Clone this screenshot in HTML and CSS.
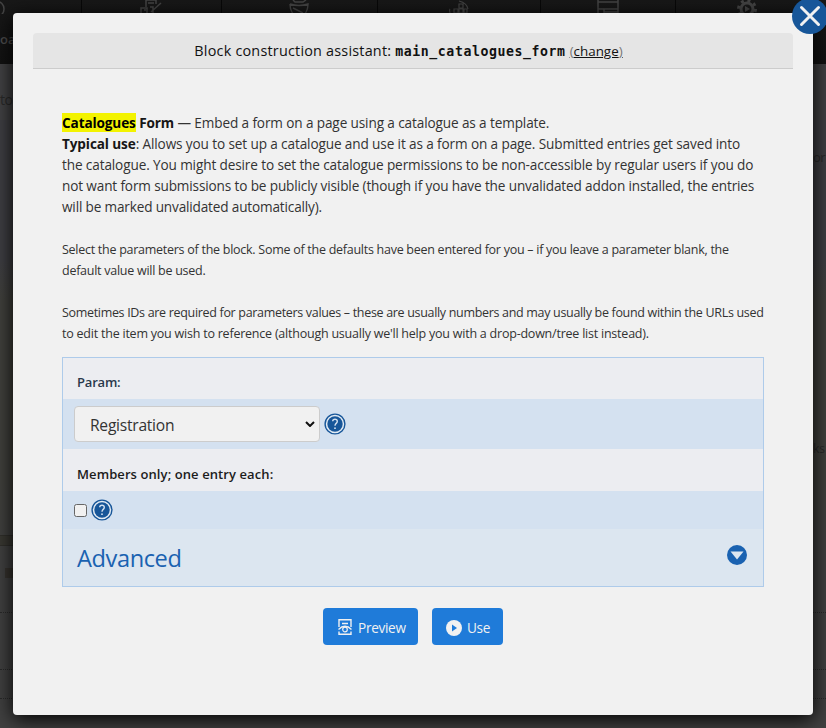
FILE: index.html
```html
<!DOCTYPE html>
<html lang="en">
<head>
<meta charset="utf-8">
<title>Block construction assistant</title>
<link rel="stylesheet" href="styles.css">
</head>
<body>
<div class="backdrop" aria-hidden="true">
  <div class="topbar">
    <span class="sep s1"></span><span class="sep s2"></span><span class="sep s3"></span><span class="sep s4"></span><span class="sep s5"></span>
    <svg class="nav-icons" width="826" height="14" viewBox="0 0 826 14" fill="none" stroke="#444" stroke-width="1.5">
      <circle cx="-4" cy="9" r="8"/>
      <path d="M146 7V0h10v4M141 14V8h6v6M148 3h6M151 12l10-9M144 10h2M150 7h3v7"/>
      <path d="M293 0l2 2h8l3-2M290 4q9 3 18 0q0 6-3 10M290 4q0 6 3 10M293 8l10 5"/>
      <path d="M459 1q8 2 9 8M450 13q-1-3 0-4M459 4h4v4h-4zM454 9h4v4h-4zM459 9h4v4h-4zM464 9h3v4h-3z" stroke-width="1.2"/>
      <path d="M598 2h20M598 9h20M598 0v14M618 0v14M604 9v5M604 12h14"/>
      <circle cx="747" cy="9" r="6" stroke-width="3"/><circle cx="747" cy="9" r="8.5" stroke-dasharray="3 3.7" stroke-width="3"/><path d="M745 6l5 3-5 3z" fill="#444" stroke="none"/>
    </svg>
    <span class="ghost g-nav">oa</span>
  </div>
  <span class="ghost g-left">tou</span>
  <span class="ghost g-right">or</span>
  <span class="ghost g-links">ks</span>
  <i class="band"></i><i class="chip"></i>
  <i class="rule r1"></i><i class="rule r2"></i><i class="rule r3"></i>
</div>

<main class="dialog">
  <button class="close" aria-label="Close"><svg width="36" height="36" viewBox="0 0 36 36"><circle cx="18" cy="18" r="18" fill="#175699"/><path d="M9.500 9.500l17 17M26.500 9.500l-17 17" stroke="#f1f1f1" stroke-width="3" stroke-linecap="round"/></svg></button>
  <h1 class="title"><span class="title-text">Block construction assistant:</span> <code>main_catalogues_form</code> <a class="change"><span>(</span>change<span>)</span></a></h1>
  <div class="content">
    <p class="intro"><span class="l1"><mark>Catalogues</mark> <b>Form</b> — Embed a form on a page using a catalogue as a template.</span><br>
      <span class="l2"><b>Typical use</b>: Allows you to set up a catalogue and use it as a form on a page. Submitted entries get saved into</span><br>
      <span class="l3">the catalogue. You might desire to set the catalogue permissions to be non-accessible by regular users if you do</span><br>
      <span class="l4">not want form submissions to be publicly visible (though if you have the unvalidated addon installed, the entries</span><br>
      <span class="l5">will be marked unvalidated automatically).</span></p>
    <p class="note"><span class="n1">Select the parameters of the block. Some of the defaults have been entered for you – if you leave a parameter blank, the</span><br>
      <span class="n2">default value will be used.</span></p>
    <p class="note"><span class="n3">Sometimes IDs are required for parameters values – these are usually numbers and may usually be found within the URLs used</span><br>
      <span class="n4">to edit the item you wish to reference (although usually we'll help you with a drop-down/tree list instead).</span></p>
    <form class="fields">
      <div class="label label-param"><span>Param:</span></div>
      <div class="input input-select">
        <div class="select"><span>Registration</span><svg width="10" height="6" viewBox="0 0 10 6"><path d="M1 1l4 4 4-4" fill="none" stroke="#111" stroke-width="2"/></svg></div>
        <span class="help"><svg width="22" height="22" viewBox="0 0 22 22"><circle cx="11" cy="11" r="9.900" fill="#e2ebf4" stroke="#175699" stroke-width="1.400"/><circle cx="11" cy="11" r="7.700" fill="#175699"/><path d="M8.700 8.200Q8.800 6.300 11 6.300t2.300 2Q13.300 9.500 12.200 10.400T11 12.800" fill="none" stroke="#d4e1f0" stroke-width="1.400"/><circle cx="11" cy="15.200" r=".9" fill="#d4e1f0"/></svg></span>
      </div>
      <div class="label label-members"><span>Members only; one entry each:</span></div>
      <div class="input input-check">
        <i class="checkbox"></i>
        <span class="help"><svg width="22" height="22" viewBox="0 0 22 22"><circle cx="11" cy="11" r="9.900" fill="#e2ebf4" stroke="#175699" stroke-width="1.400"/><circle cx="11" cy="11" r="7.700" fill="#175699"/><path d="M8.700 8.200Q8.800 6.300 11 6.300t2.300 2Q13.300 9.500 12.200 10.400T11 12.800" fill="none" stroke="#d4e1f0" stroke-width="1.400"/><circle cx="11" cy="15.200" r=".9" fill="#d4e1f0"/></svg></span>
      </div>
      <div class="advanced"><h2>Advanced</h2><svg width="20" height="20" viewBox="0 0 20 20"><circle cx="10" cy="10" r="10" fill="#1a62b1"/><path d="M3.500 6.500h13L10 14.500z" fill="#dce6f0"/></svg></div>
    </form>
    <div class="actions">
      <button class="btn preview"><svg width="14" height="16" viewBox="0 0 14 16" fill="none" stroke="#f1f1f1" stroke-width="1.400"><path d="M1 8V.7h12V8M4 4.500h6M1 12.500v2.800h12v-2.800"/><path d="M.5 10.500Q7 4 13.500 10.500"/><circle cx="7" cy="10.500" r="2.300" stroke-width="1.200"/></svg><span>Preview</span></button>
      <button class="btn use"><svg width="16" height="16" viewBox="0 0 16 16"><circle cx="8" cy="8" r="8" fill="#f1f1f1"/><path d="M6 4.500L11 8l-5 3.500z" fill="#1f7bd9"/></svg><span>Use</span></button>
    </div>
  </div>
</main>
</body>
</html>
```
FILE: styles.css
```css
* { box-sizing: border-box; }
body {
  margin: 0; width: 826px; height: 728px; overflow: hidden; position: relative;
  font-family: "Open Sans", "Noto Sans", sans-serif; color: #333;
  background: #424242;
}
p, h1, h2 { margin: 0; font-weight: 400; }
button { border: 0; padding: 0; font-family: inherit; }

/* Dimmed page behind the dialog */
.backdrop { position: absolute; inset: 0; overflow: hidden; background: linear-gradient(#424244 0 120px, #3f3f43 120px 260px, #41413d 300px 480px, #414141 560px); }
.topbar { position: relative; height: 64px; background: linear-gradient(#181818, #121212); }
.nav-icons { position: absolute; left: 0; top: 0; }
.sep { position: absolute; top: 0; width: 1px; height: 64px; background: #080808; }
.s1 { left: 81px; } .s2 { left: 221px; } .s3 { left: 377px; } .s4 { left: 540px; } .s5 { left: 675px; }
.ghost { position: absolute; color: #292929; font-size: 14px; line-height: 20px; }
.g-nav { left: 0; top: 29px; color: #4c4c4c; font-weight: 600; font-size: 13px; }
.g-left { left: 0; top: 90px; letter-spacing: -.5px; }
.g-right { left: 813px; top: 147px; font-size: 13px; letter-spacing: -.5px; }
.g-links { left: 813px; top: 439px; font-size: 12px; }
.band { position: absolute; left: 0; top: 535px; width: 13px; height: 11px; background: #393832; border: solid #302f2b; border-width: 1px 0; }
.chip { position: absolute; left: 5px; top: 568px; width: 20px; height: 10px; background: #37342f; }
.rule { position: absolute; left: 0; width: 100%; border-top: 1px dotted #2a2a2a; }
.r1 { top: 612px; } .r2 { top: 669px; } .r3 { top: 698px; }

.dialog {
  position: relative; width: 800px; height: 702px; margin: 0 13px; top: 13px; padding: 20px;
  background: #f1f1f1; border-radius: 4px; box-shadow: 0 4px 20px #000;
}
.close { position: absolute; left: 779px; top: -15px; width: 36px; height: 36px; background: none; }
.close svg { display: block; }
.title {
  height: 36px; padding-right: 9px; display: flex; align-items: center; justify-content: center; gap: 4px;
  background: #e5e5e5; border-bottom: 1px solid #ccc; border-radius: 4px 4px 0 0;
  font-size: 14.4px; line-height: 20px; color: #111; white-space: nowrap;
}
.title-text { letter-spacing: .21px; }
.title code { font: 700 13.2px/20px "DejaVu Sans Mono", monospace; letter-spacing: .58px; padding-top: 2px; }
.change { font-size: 13.4px; text-decoration: underline; }
.change span { color: #777; }

.content { padding: 43px 29px 0; white-space: nowrap; }
.intro { font-size: 13.6px; line-height: 21px; }
.intro b { color: #161616; }
mark { background: #f3f300; color: #000; font-weight: 700; }
.note { margin-top: 21px; font-size: 12.5px; line-height: 21px; }
.intro + .note { margin-top: 22px; }

/* Tracking that keeps each copy line to its measure */
.l1 { letter-spacing: -.122px; }
.l2 { letter-spacing: -.12px; }
.l3 { letter-spacing: -.125px; }
.l4 { letter-spacing: -.14px; }
.l5 { letter-spacing: -.165px; }
.n1 { letter-spacing: -.267px; }
.n2 { letter-spacing: -.26px; }
.n3 { letter-spacing: -.318px; }
.n4 { letter-spacing: -.224px; }

.fields { margin-top: 13px; height: 230px; border: 1px solid #aecbea; background: #ecedf1; }
.label { height: 41px; padding: 14px 14px 0; font-size: 13px; line-height: 20px; font-weight: 600; color: #1c1c1c; }
.label-param { color: #2a394c; letter-spacing: -.2px; }
.label-members { height: 42px; padding-top: 15px; letter-spacing: .09px; }
.input { display: flex; align-items: center; background: #d4e1f0; }
.input-select { height: 50px; padding-left: 11px; gap: 4px; }
.select {
  width: 246px; height: 36px; padding: 2px 4px 0 15px; display: flex; align-items: center; justify-content: space-between;
  border: 1px solid #ccc; border-radius: 4px; background: #f1f1f1; font-size: 15.6px; letter-spacing: -.25px; color: #333;
}
.select svg { margin-top: -2px; }
.help { height: 22px; }
.help svg { display: block; }
.input-check { height: 38px; padding-left: 11px; gap: 4px; }
.checkbox { width: 13px; height: 13px; border: 1px solid #666; border-radius: 2.5px; background: #f1f1f1; }
.advanced { height: 57px; padding: 0 16px 0 14px; display: flex; align-items: center; justify-content: space-between; background: #dce6f0; }
.advanced h2 { font-size: 23.6px; line-height: 32px; letter-spacing: -.4px; color: #1a62b1; }
.advanced svg { margin-top: -6px; }

.actions { margin-top: 21px; display: flex; justify-content: center; gap: 14px; }
.btn { height: 37px; display: flex; align-items: center; border-radius: 4px; background: #1f7bd9; color: #f1f1f1; font-size: 13.6px; }
.btn span { padding-top: 1px; letter-spacing: -.3px; }
.preview { width: 95px; padding-left: 15px; gap: 6px; }
.use { width: 71px; padding-left: 14px; gap: 5px; }
.use svg { margin-top: 2px; }
```
